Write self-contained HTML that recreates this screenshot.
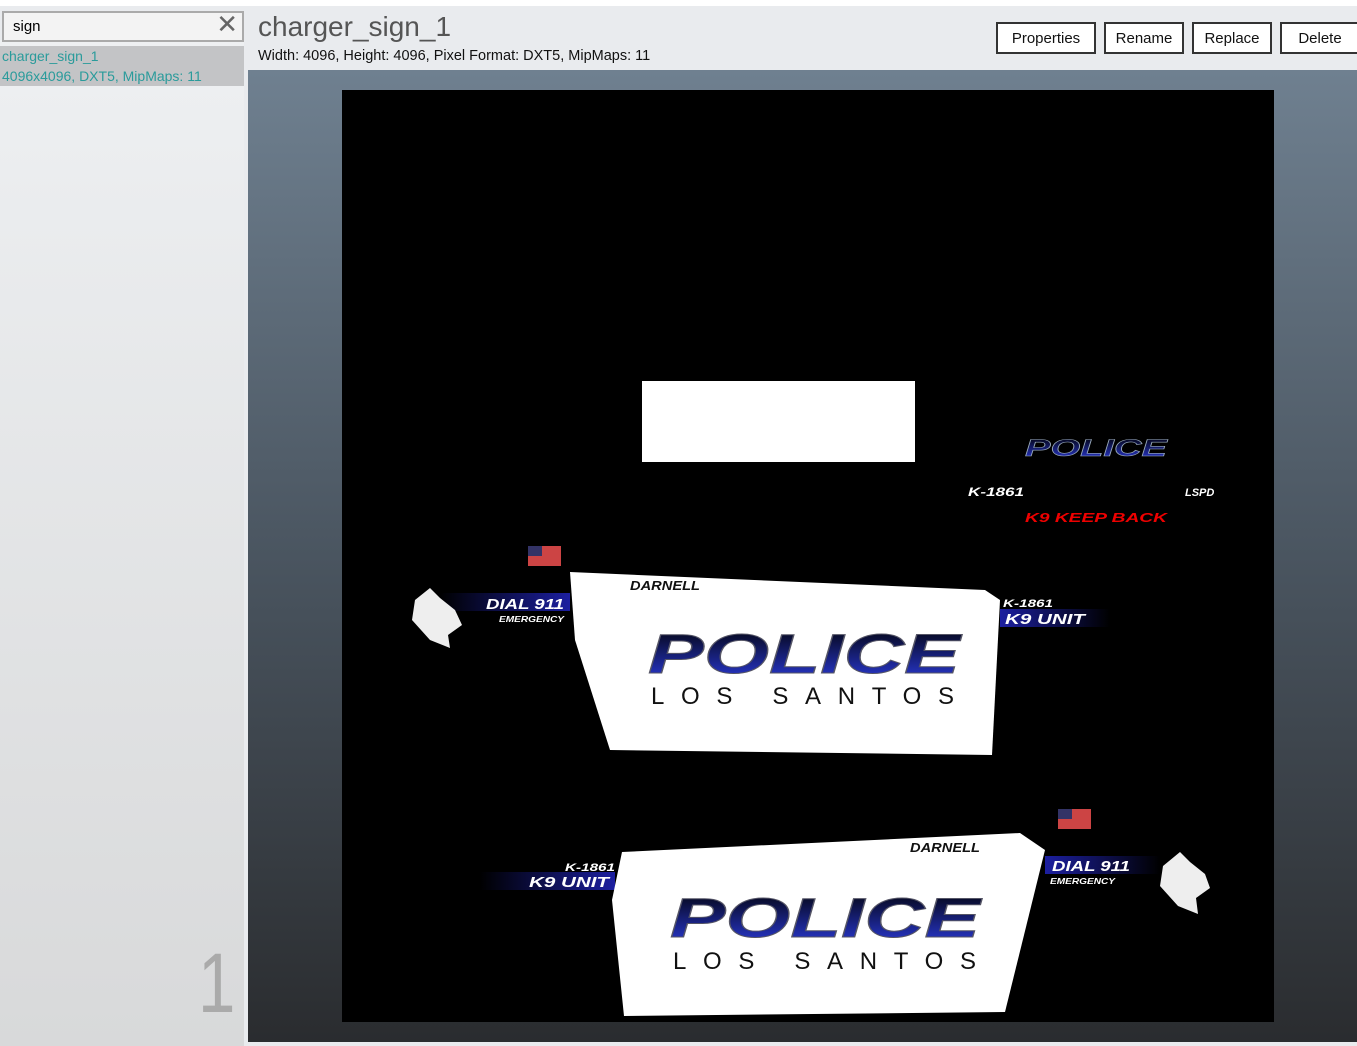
<!DOCTYPE html>
<html><head><style>
body{margin:0;width:1357px;height:1046px;overflow:hidden;background:#fff;font-family:"Liberation Sans",sans-serif;position:relative}
.a{position:absolute}
.btn{position:absolute;top:22px;height:32px;border:2px solid #333;background:#fff;font-size:15px;line-height:30px;text-align:center;box-sizing:border-box;color:#111}
</style></head><body>
<div class="a" style="left:0;top:6px;width:1357px;height:1040px;background:#e9ebee"></div>
<div class="a" style="left:0;top:40px;width:244px;height:1006px;background:linear-gradient(#eef0f2,#d8d9da)"></div>
<div class="a" style="left:2px;top:11px;width:242px;height:31px;border:2px solid #aaa;background:#f3f3f3;box-sizing:border-box;font-size:15px;line-height:27px;padding-left:9px">sign<span class="a" style="right:4px;top:-2px;font-size:26px;color:#666">✕</span></div>
<div class="a" style="left:0;top:46px;width:244px;height:40px;background:#c3c4c6;color:#2a9b9b;font-size:14px;line-height:20px;padding-left:2px;box-sizing:border-box">charger_sign_1<br>4096x4096, DXT5, MipMaps: 11</div>
<div class="a" style="left:198px;top:935px;font-size:84px;color:#aaa;transform:scaleX(0.8);transform-origin:left">1</div>
<div class="a" style="left:258px;top:11px;font-size:28px;color:#555">charger_sign_1</div>
<div class="a" style="left:258px;top:48px;font-size:14.5px;color:#111">Width: 4096, Height: 4096, Pixel Format: DXT5, MipMaps: 11</div>
<div class="btn" style="left:996px;width:100px">Properties</div>
<div class="btn" style="left:1104px;width:80px">Rename</div>
<div class="btn" style="left:1192px;width:80px">Replace</div>
<div class="btn" style="left:1280px;width:80px">Delete</div>
<div class="a" style="left:248px;top:70px;width:1109px;height:972px;background:linear-gradient(#6f8090,#4a5560 50%,#2a2c2f)"></div>
<svg class="a" style="left:342px;top:90px" width="932" height="932" viewBox="342 90 932 932">
<defs><linearGradient id="g" x1="0" y1="0" x2="0" y2="1"><stop offset="0" stop-color="#000"/><stop offset="1" stop-color="#2b3be0"/></linearGradient>
<linearGradient id="b" x1="0" x2="1"><stop offset="0" stop-color="#000"/><stop offset="1" stop-color="#1c1fa0"/></linearGradient>
<linearGradient id="b2" x1="1" x2="0"><stop offset="0" stop-color="#000"/><stop offset="1" stop-color="#1c1fa0"/></linearGradient></defs>
<rect x="342" y="90" width="932" height="932" fill="#000"/>
<rect x="642" y="381" width="273" height="81" fill="#fff"/>
<text x="1025" y="456" font-size="24" font-style="italic" font-weight="bold" fill="url(#g)" stroke="#9ab" stroke-width=".6" textLength="142" lengthAdjust="spacingAndGlyphs">POLICE</text>
<text x="968" y="496" font-size="12" font-style="italic" font-weight="bold" fill="#fff" textLength="56" lengthAdjust="spacingAndGlyphs">K-1861</text>
<text x="1185" y="496" font-size="11" font-style="italic" font-weight="bold" fill="#fff">LSPD</text>
<text x="1025" y="522" font-size="13" font-style="italic" font-weight="bold" fill="#e00" textLength="142" lengthAdjust="spacingAndGlyphs">K9 KEEP BACK</text>
<rect x="528" y="546" width="33" height="20" fill="#c44"/><rect x="528" y="546" width="14" height="10" fill="#336"/>
<rect x="1058" y="809" width="33" height="20" fill="#c44"/><rect x="1058" y="809" width="14" height="10" fill="#336"/>
<rect x="440" y="593" width="130" height="18" fill="url(#b)"/>
<rect x="1000" y="609" width="110" height="18" fill="url(#b2)"/>
<rect x="480" y="872" width="135" height="18" fill="url(#b)"/>
<rect x="1045" y="856" width="115" height="18" fill="url(#b2)"/>
<path d="M430 588 L440 598 L455 610 L462 625 L448 635 L450 648 L430 640 L412 620 L415 600Z" fill="#eee"/>
<path d="M1180 852 L1190 862 L1205 874 L1210 888 L1196 898 L1198 914 L1178 906 L1160 886 L1163 866Z" fill="#eee"/>
<polygon points="570,572 985,590 1000,600 992,755 610,750 575,640" fill="#fff"/>
<polygon points="622,852 1020,833 1045,850 1005,1012 624,1016 612,900" fill="#fff"/>
<g font-style="italic" font-weight="bold">
<text x="486" y="609" font-size="15" fill="#fff" textLength="78" lengthAdjust="spacingAndGlyphs">DIAL 911</text>
<text x="499" y="622" font-size="8" fill="#fff" textLength="65" lengthAdjust="spacingAndGlyphs">EMERGENCY</text>
<text x="1003" y="607" font-size="11" fill="#fff" textLength="50" lengthAdjust="spacingAndGlyphs">K-1861</text>
<text x="1005" y="624" font-size="15" fill="#fff" textLength="80" lengthAdjust="spacingAndGlyphs">K9 UNIT</text>
<text x="630" y="590" font-size="13" fill="#111" textLength="70" lengthAdjust="spacingAndGlyphs">DARNELL</text>
<text x="648" y="673" font-size="56" fill="url(#g)" stroke="#556" stroke-width="1" textLength="312" lengthAdjust="spacingAndGlyphs">POLICE</text>
<text x="565" y="871" font-size="11" fill="#fff" textLength="50" lengthAdjust="spacingAndGlyphs">K-1861</text>
<text x="529" y="887" font-size="15" fill="#fff" textLength="80" lengthAdjust="spacingAndGlyphs">K9 UNIT</text>
<text x="1052" y="871" font-size="15" fill="#fff" textLength="78" lengthAdjust="spacingAndGlyphs">DIAL 911</text>
<text x="1050" y="884" font-size="8" fill="#fff" textLength="65" lengthAdjust="spacingAndGlyphs">EMERGENCY</text>
<text x="910" y="852" font-size="13" fill="#111" textLength="70" lengthAdjust="spacingAndGlyphs">DARNELL</text>
<text x="670" y="937" font-size="56" fill="url(#g)" stroke="#556" stroke-width="1" textLength="310" lengthAdjust="spacingAndGlyphs">POLICE</text>
</g>
<text x="651" y="704" font-size="24" fill="#111" textLength="303" lengthAdjust="spacing">LOS  SANTOS</text>
<text x="673" y="969" font-size="24" fill="#111" textLength="303" lengthAdjust="spacing">LOS  SANTOS</text>
</svg>
</body></html>
